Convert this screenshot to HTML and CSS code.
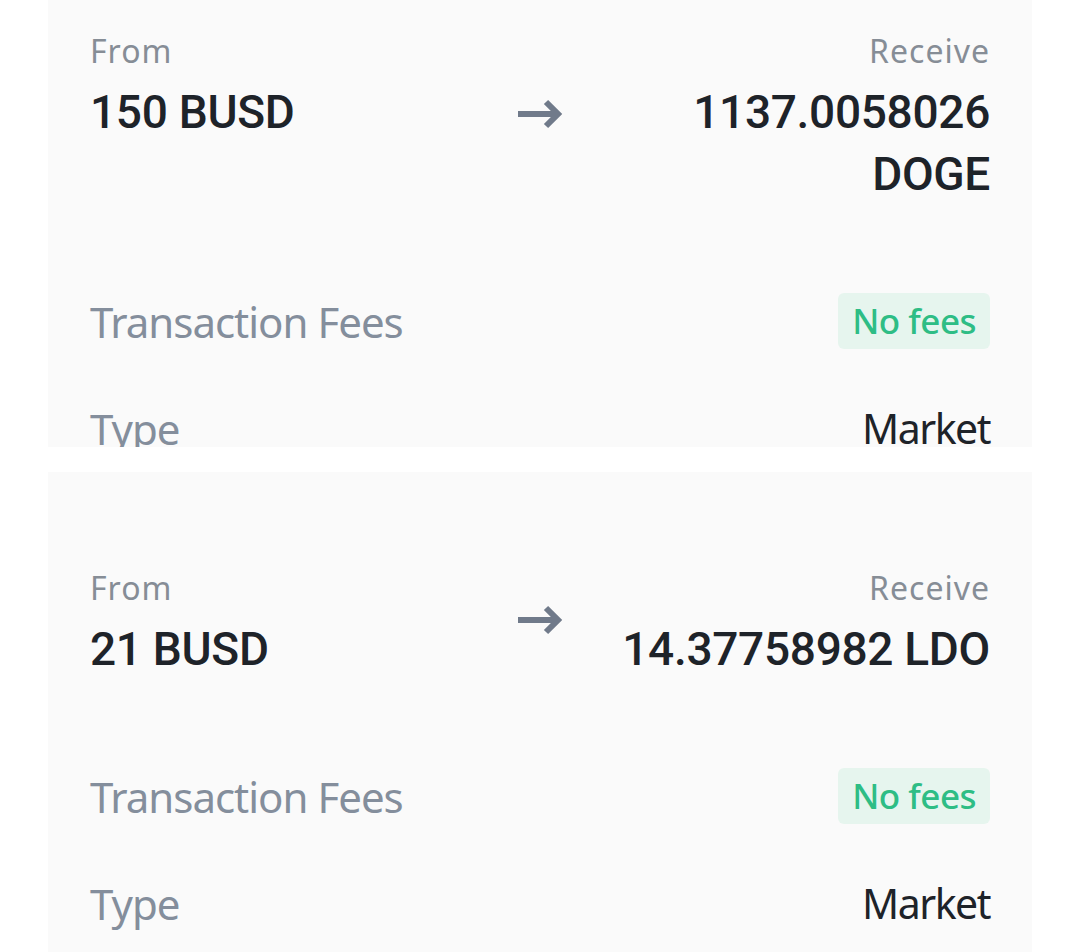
FILE: index.html
```html
<!DOCTYPE html>
<html lang="en">
<head>
    <meta charset="UTF-8">
    <title>Convert History</title>
    <link rel="stylesheet" href="styles.css">
</head>
<body>
    <div class="list">
        <div class="card cut">
            <div class="swap">
                <div class="side">
                    <p class="label">From</p>
                    <p class="amount">150 BUSD</p>
                </div>
                <svg class="arrow" width="46" height="32" viewBox="0 0 46 32">
                    <path d="M1 16H41M29 4L41 16L29 28" fill="none" stroke="#707a8a" stroke-width="6"/>
                </svg>
                <div class="side right">
                    <p class="label">Receive</p>
                    <p class="amount">1137.0058026 DOGE</p>
                </div>
            </div>
            <div class="row">
                <span class="key">Transaction Fees</span>
                <span class="badge">No fees</span>
            </div>
            <div class="row">
                <span class="key">Type</span>
                <span class="val">Market</span>
            </div>
        </div>
        <div class="card">
            <div class="swap">
                <div class="side">
                    <p class="label">From</p>
                    <p class="amount">21 BUSD</p>
                </div>
                <svg class="arrow" width="46" height="32" viewBox="0 0 46 32">
                    <path d="M1 16H41M29 4L41 16L29 28" fill="none" stroke="#707a8a" stroke-width="6"/>
                </svg>
                <div class="side right">
                    <p class="label">Receive</p>
                    <p class="amount">14.37758982 LDO</p>
                </div>
            </div>
            <div class="row">
                <span class="key">Transaction Fees</span>
                <span class="badge">No fees</span>
            </div>
            <div class="row">
                <span class="key">Type</span>
                <span class="val">Market</span>
            </div>
        </div>
    </div>
</body>
</html>
```

FILE: styles.css
```css
* {
    margin: 0;
    padding: 0;
}
html, body {
    background: #fff;
    overflow: hidden;
}
body {
    font-family: "Noto Sans", "Open Sans", sans-serif;
    color: #1e2329;
}
.list {
    margin-top: -65px;
    padding: 0 48px;
    display: flex;
    flex-direction: column;
    gap: 25px;
}
.card {
    background: #fafafa;
    padding: 96px 42px 40px;
}
.cut {
    height: 512px;
    box-sizing: border-box;
    overflow: hidden;
}
.swap {
    display: flex;
    align-items: flex-start;
    gap: 20px;
}
.side {
    flex: 1 1 0;
}
.right {
    text-align: right;
}
.label {
    font-size: 32px;
    line-height: 40px;
    letter-spacing: 1px;
    color: #868d96;
    margin-bottom: 10px;
}
.amount {
    font-family: Roboto, "Liberation Sans", sans-serif;
    font-weight: 500;
    font-size: 46px;
    line-height: 62px;
    letter-spacing: -0.3px;
    color: #1e2329;
}
.arrow {
    flex: none;
    display: block;
    align-self: center;
    margin-bottom: 8px;
}
.row {
    display: flex;
    justify-content: space-between;
    align-items: center;
    height: 56px;
    margin-top: 51px;
}
.swap + .row {
    margin-top: 88px;
}
.key {
    font-size: 42px;
    letter-spacing: -1px;
    color: #848e9c;
}
.val {
    font-size: 41px;
    letter-spacing: -1.5px;
    color: #1e2329;
}
.badge {
    font-size: 35px;
    font-weight: 500;
    line-height: 56px;
    letter-spacing: -0.5px;
    padding: 0 14px;
    border-radius: 6px;
    background: #e6f5ee;
    color: #2ebd85;
}
```
